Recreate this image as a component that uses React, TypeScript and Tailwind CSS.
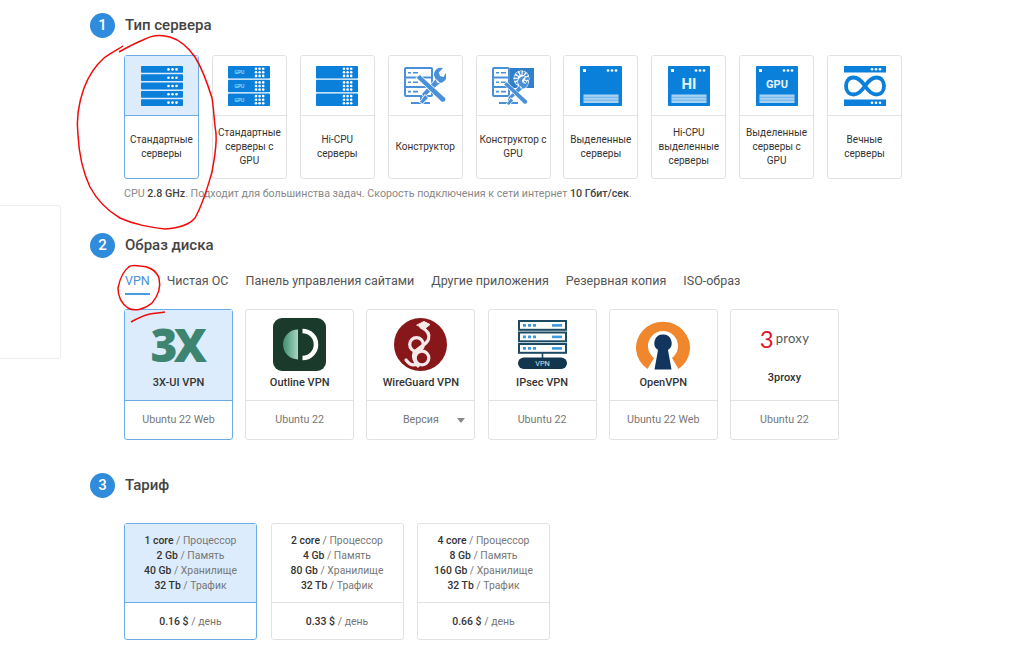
import type { ReactNode } from 'react'

const BLUE = '#0b80db'
const TOOL = '#4a90d9'

function Dots({ x, y, cols, rows, step = 3.4, r = 0.95 }: { x: number; y: number; cols: number; rows: number; step?: number; r?: number }) {
  const items = []
  for (let i = 0; i < cols; i++) {
    for (let j = 0; j < rows; j++) {
      items.push(<circle key={`${i}-${j}`} cx={x + i * step} cy={y + j * step} r={r} fill="#fff" />)
    }
  }
  return <>{items}</>
}

function StandardIcon() {
  return (
    <svg width="42" height="40" viewBox="0 0 42 40">
      {[0, 8.3, 16.6, 24.9, 33.2].map((y) => (
        <g key={y}>
          <rect y={y} width="42" height="6.8" rx="0.8" fill={BLUE} />
          <Dots x={27.5} y={y + 3.4} cols={3} rows={1} step={4} r={1.3} />
        </g>
      ))}
    </svg>
  )
}

function GpuRacksIcon({ gpu }: { gpu: boolean }) {
  return (
    <svg width="42" height="40" viewBox="0 0 42 40">
      {[0, 13.7, 27.4].map((y) => (
        <g key={y}>
          <rect y={y} width="42" height="12.6" rx="0.8" fill={BLUE} />
          {gpu && (
            <text x="6.5" y={y + 8.2} fontSize="5" fill="#d8ebfb" fontFamily="Roboto, sans-serif">GPU</text>
          )}
          <Dots x={28} y={y + 2.7} cols={3} rows={3} step={3.6} r={1.3} />
        </g>
      ))}
    </svg>
  )
}

// crossed wrench and screwdriver, white halo keeps it apart from the server lines
function ToolsPart() {
  return (
    <g stroke="#fff" strokeWidth="1.4" paintOrder="stroke">
      <path d="M18 28 L20 31 L36 17 L32 13 Z M30 9.5 A7 7 0 0 1 39 2 L34.8 6.5 L36 10 L39.6 11 L41.8 7 A7 7 0 0 1 33 16.5 Z" fill={TOOL} />
      <path d="M16 36 L21 29 L24 32 L18.5 37.5 Z" fill={TOOL} />
      <path d="M16 9 L19 12 L41 32 C42.5 34 40 37 37.5 35.5 L15 14 L12.5 11.5 Z" fill={TOOL} />
    </g>
  )
}

function ConstructorIcon({ gpu }: { gpu: boolean }) {
  const right = gpu ? 17 : 28
  return (
    <svg width="42" height="40" viewBox="0 0 42 40">
      <rect x="1" y="2" width={right - 1} height="28" rx="1" fill="none" stroke={TOOL} strokeWidth="2" />
      <path d={`M1 11.5 H${right} M1 21 H${right}`} stroke={TOOL} strokeWidth="2" />
      <path d="M4 6.8 H7 M9 6.8 H14 M4 16.2 H7 M9 16.2 H14 M4 25.6 H7 M9 25.6 H14" stroke={TOOL} strokeWidth="1.6" />
      <path d="M7 37 H26 M17 30 V37" stroke={TOOL} strokeWidth="2" />
      {gpu ? (
        <g>
          <rect x="18" y="2" width="24" height="20" fill="#2f7fc9" />
          <circle cx="29.5" cy="12.5" r="8" fill="#fff" />
          <circle cx="29.5" cy="12.5" r="5.6" fill="none" stroke={TOOL} strokeWidth="3.6" strokeDasharray="1.8 1.2" />
          <g transform="translate(2 9) scale(0.8)">
            <ToolsPart />
          </g>
        </g>
      ) : (
        <ToolsPart />
      )}
    </svg>
  )
}

function DedicatedIcon({ label }: { label?: string }) {
  return (
    <svg width="42" height="40" viewBox="0 0 42 40">
      <rect width="42" height="40" rx="0.8" fill={BLUE} />
      <rect x="3" y="3" width="3" height="3" fill="#fff" />
      <Dots x={28} y={4.5} cols={3} rows={1} step={4} r={1.35} />
      <rect x="3.5" y="28.5" width="35" height="8.5" fill="#a9d3f3" />
      <path d="M3.5 31.3 H38.5 M3.5 34.2 H38.5" stroke="#5aaae8" strokeWidth="0.8" />
      {label && (
        <text
          x="21"
          y={label === 'HI' ? 23 : 22}
          textAnchor="middle"
          fontSize={label === 'HI' ? 15 : 11}
          fontWeight="700"
          fill="#e6f3fd"
          fontFamily="Roboto, sans-serif"
        >
          {label}
        </text>
      )}
    </svg>
  )
}

function InfinityIcon() {
  return (
    <svg width="42" height="40" viewBox="0 0 42 40">
      <rect width="42" height="6.5" fill={BLUE} />
      <rect y="33.5" width="42" height="6.5" fill={BLUE} />
      <Dots x={28} y={3.2} cols={3} rows={1} step={4} r={1.3} />
      <Dots x={28} y={36.8} cols={3} rows={1} step={4} r={1.3} />
      <path
        d="M21 20 C17 14 14 11.5 9.5 11.5 C4.5 11.5 2 15.5 2 20 C2 24.5 4.5 28.5 9.5 28.5 C14 28.5 17 26 21 20 C25 14 28 11.5 32.5 11.5 C37.5 11.5 40 15.5 40 20 C40 24.5 37.5 28.5 32.5 28.5 C28 28.5 25 26 21 20 Z"
        fill="none"
        stroke={BLUE}
        strokeWidth="3.8"
      />
    </svg>
  )
}

function OutlineLogo() {
  return (
    <svg width="53" height="53" viewBox="0 0 53 53">
      <defs>
        <linearGradient id="outlineHalf" x1="0" x2="1" y1="0" y2="0">
          <stop offset="0" stopColor="#3f8f72" />
          <stop offset="1" stopColor="#a9d5c2" />
        </linearGradient>
      </defs>
      <rect width="53" height="53" rx="9" fill="#1a3a2b" />
      <path d="M25 11.5 A15 15 0 0 0 25 41.5 Z" fill="url(#outlineHalf)" />
      <path d="M29.5 13 A13.5 13.5 0 0 1 29.5 40" fill="none" stroke="#fff" strokeWidth="4.6" />
    </svg>
  )
}

function WireGuardLogo() {
  return (
    <svg width="53" height="53" viewBox="0 0 53 53">
      <circle cx="26.5" cy="26.5" r="26.5" fill="#88171a" />
      <g fill="none" stroke="#f5e9e9" strokeWidth="3.2" strokeLinecap="round">
        <circle cx="22.5" cy="26.5" r="6.8" />
        <circle cx="28" cy="40" r="6.8" />
        <path d="M27 9 C33 12 36 16 34.5 21 C33 27 24 29 20 35 C18.5 39 20 43 24 48" />
        <path d="M23 46 C19 48 15 46 12 42" />
        <path d="M23 7 L30 3.5 L36 6.5 L31 10.5 Z" fill="#f5e9e9" strokeWidth="1" />
      </g>
    </svg>
  )
}

function IpsecLogo() {
  return (
    <svg width="49" height="49" viewBox="0 0 49 49">
      {[0, 11.5, 23].map((y) => (
        <g key={y}>
          <rect x="1" y={y + 1} width="47" height="8.8" fill="#fff" stroke="#1d4a63" strokeWidth="2" />
          <path d={`M5 ${y + 5.4} H8 M10 ${y + 5.4} H13 M15 ${y + 5.4} H18`} stroke="#3d9ae0" strokeWidth="2.6" />
          <path d={`M34 ${y + 5.4} H44`} stroke="#3d9ae0" strokeWidth="2.6" />
        </g>
      ))}
      <path d="M24.5 33 V38" stroke="#1d4a63" strokeWidth="1.6" />
      <rect y="37.5" width="49" height="11.5" rx="5.7" fill="#12364d" />
      <text x="24.5" y="46.4" textAnchor="middle" fontSize="7.4" fill="#cfe3ef" fontFamily="Roboto, sans-serif">VPN</text>
    </svg>
  )
}

function OpenVpnLogo() {
  return (
    <svg width="54" height="52" viewBox="0 0 54 52">
      <path d="M11.5 50 A27 26 0 1 1 42.5 50 L36 39 A15 15 0 1 0 18 39 Z" fill="#f0872d" />
      <path d="M27 15.5 A8.5 8.5 0 0 1 32 31 L35.5 50.5 H18.5 L22 31 A8.5 8.5 0 0 1 27 15.5 Z" fill="#12355f" />
    </svg>
  )
}

function ThreeXLogo() {
  return (
    <span className="block text-[46px] leading-[53px] font-extrabold tracking-[-3.5px] -ml-[3px] text-[#3d8570] font-['Open_Sans',sans-serif]">3X</span>
  )
}

function ProxyLogo() {
  return (
    <span className="flex items-center h-[30px]">
      <span className="text-[#e0182d] text-[24px] leading-none font-['Lato',sans-serif]">3</span>
      <span className="text-[#555] text-[13px] leading-none tracking-[0.3px] ml-[2px] font-['Lato',sans-serif]">proxy</span>
    </span>
  )
}

const serverTypes: { icon: ReactNode; label: string[]; active?: boolean }[] = [
  { icon: <StandardIcon />, label: ['Стандартные', 'серверы'], active: true },
  { icon: <GpuRacksIcon gpu />, label: ['Стандартные', 'серверы с', 'GPU'] },
  { icon: <GpuRacksIcon gpu={false} />, label: ['Hi-CPU', 'серверы'] },
  { icon: <ConstructorIcon gpu={false} />, label: ['Конструктор'] },
  { icon: <ConstructorIcon gpu />, label: ['Конструктор с', 'GPU'] },
  { icon: <DedicatedIcon />, label: ['Выделенные', 'серверы'] },
  { icon: <DedicatedIcon label="HI" />, label: ['Hi-CPU', 'выделенные', 'серверы'] },
  { icon: <DedicatedIcon label="GPU" />, label: ['Выделенные', 'серверы с', 'GPU'] },
  { icon: <InfinityIcon />, label: ['Вечные', 'серверы'] },
]

const tabs = ['VPN', 'Чистая ОС', 'Панель управления сайтами', 'Другие приложения', 'Резервная копия', 'ISO-образ']

const images: { logo: ReactNode; name: string; version: string; active?: boolean; select?: boolean; short?: boolean }[] = [
  { logo: <ThreeXLogo />, name: '3X-UI VPN', version: 'Ubuntu 22 Web', active: true },
  { logo: <OutlineLogo />, name: 'Outline VPN', version: 'Ubuntu 22' },
  { logo: <WireGuardLogo />, name: 'WireGuard VPN', version: 'Версия', select: true },
  { logo: <IpsecLogo />, name: 'IPsec VPN', version: 'Ubuntu 22' },
  { logo: <OpenVpnLogo />, name: 'OpenVPN', version: 'Ubuntu 22 Web' },
  { logo: <ProxyLogo />, name: '3proxy', version: 'Ubuntu 22', short: true },
]

const tariffs = [
  { core: '1 core', ram: '2 Gb', disk: '40 Gb', price: '0.16 $', active: true },
  { core: '2 core', ram: '4 Gb', disk: '80 Gb', price: '0.33 $' },
  { core: '4 core', ram: '8 Gb', disk: '160 Gb', price: '0.66 $' },
]

function StepTitle({ n, title }: { n: number; title: string }) {
  return (
    <div className="flex items-center gap-[10px] h-[25px]">
      <span className="w-[25px] h-[25px] rounded-full bg-[#2f8bdc] text-white text-[15px] font-medium flex items-center justify-center">{n}</span>
      <h2 className="text-[15px] font-medium text-[#444]">{title}</h2>
    </div>
  )
}

function Spec({ value, name }: { value: string; name: string }) {
  return (
    <p>
      <b className="font-medium text-[#333]">{value}</b>
      <span className="text-[#777]"> / {name}</span>
    </p>
  )
}

function Scribbles() {
  return (
    <svg className="absolute inset-0 pointer-events-none" width="1024" height="663" viewBox="0 0 1024 663" fill="none" stroke="#f00a0a" strokeWidth="1.5">
      <path d="M119 52 C128 47 135 43 143 40 C150 36 160 34 170 37 C180 40 188 47 195 57 C202 68 207 82 212 98 C214 110 214 122 216 133 C217 148 214 160 212 172 C208 186 203 204 195 218 C190 224 180 228 165 229 C150 227 135 225 120 218 C108 211 97 200 90 187 C83 172 79 155 78 135 C76 118 79 102 84 88 C89 75 96 65 104 58 C111 53 117 50 123 46" />
      <path d="M130 266 C124 270 120 278 118 288 C118 297 122 304 128 308 C135 312 145 309 152 303 C158 296 161 287 159 278 C156 270 148 266 140 266 C135 265 131 265 128 267" />
      <path d="M131 322 C138 318 146 315 150 314 C155 313 160 313 165 312" />
    </svg>
  )
}

export default function App() {
  return (
    <div className="relative w-[1024px] h-[663px] overflow-hidden bg-white flex font-['Roboto',sans-serif]">
      <aside className="w-[61px] shrink-0 h-[154px] mt-[205px] border border-l-0 border-[#eeeeee] rounded-r-[3px]" />

      <main className="pl-[29px] pt-[13px]">
        <StepTitle n={1} title="Тип сервера" />
        <div className="ml-[34px] mt-[17px] flex gap-[12.875px]">
          {serverTypes.map((s) => (
            <div
              key={s.label.join(' ')}
              className={`w-[75px] h-[124px] rounded-[3px] border flex flex-col ${s.active ? 'border-[#6aabe8]' : 'border-[#e2e2e2]'}`}
            >
              <div className={`h-[60px] shrink-0 flex items-center justify-center border-b ${s.active ? 'bg-[#dcecfc] border-[#6aabe8]' : 'border-[#e2e2e2]'}`}>
                {s.icon}
              </div>
              <div className="flex-1 flex flex-col items-center justify-center text-[10px] leading-[14px] text-[#333] text-center whitespace-nowrap">
                {s.label.map((l) => (
                  <span key={l}>{l}</span>
                ))}
              </div>
            </div>
          ))}
        </div>
        <p className="ml-[34px] mt-[8px] text-[10.66px] leading-[14px] text-[#888] whitespace-nowrap">
          CPU <b className="font-medium text-[#444]">2.8 GHz</b>. Подходит для большинства задач. Скорость подключения к сети интернет <b className="font-medium text-[#444]">10 Гбит/сек</b>.
        </p>

        <div className="mt-[32px]">
          <StepTitle n={2} title="Образ диска" />
        </div>
        <div className="ml-[35px] mt-[14px] flex gap-[17px] text-[12.5px] leading-[18px] text-[#555]">
          {tabs.map((t, i) => (
            <span key={t} className={`pb-[3px] border-b-2 ${i === 0 ? 'text-[#4a90d9] border-[#4a9be6]' : 'border-transparent'}`}>
              {t}
            </span>
          ))}
        </div>
        <div className="ml-[34px] mt-[14px] flex gap-[12.2px]">
          {images.map((img) => (
            <div
              key={img.name}
              className={`w-[109px] h-[131px] rounded-[3px] border flex flex-col ${img.active ? 'border-[#6aabe8]' : 'border-[#e2e2e2]'}`}
            >
              <div className={`h-[91px] shrink-0 border-b flex flex-col items-center ${img.active ? 'bg-[#dcecfc] border-[#6aabe8]' : 'border-[#e2e2e2]'}`}>
                <div className={`flex items-center justify-center ${img.short ? 'h-[45px] mt-[6px]' : 'h-[53px] mt-[8px]'}`}>{img.logo}</div>
                <span className={`text-[11px] leading-[14px] font-medium text-[#333] ${img.short ? 'mt-[10px]' : 'mt-[5px]'}`}>{img.name}</span>
              </div>
              <div className="flex-1 relative pt-[1px] flex items-center justify-center text-[10.7px] text-[#777]">
                {img.version}
                {img.select && <span className="absolute right-[9px] top-[17px] w-0 h-0 border-x-[4px] border-x-transparent border-t-[5px] border-t-[#888]" />}
              </div>
            </div>
          ))}
        </div>

        <div className="mt-[33px]">
          <StepTitle n={3} title="Тариф" />
        </div>
        <div className="ml-[34px] mt-[25px] flex gap-[13.5px]">
          {tariffs.map((t) => (
            <div
              key={t.price}
              className={`w-[133px] h-[117px] rounded-[3px] border flex flex-col ${t.active ? 'border-[#6aabe8]' : 'border-[#e2e2e2]'}`}
            >
              <div className={`h-[79px] shrink-0 border-b pb-[1px] flex flex-col justify-center text-center text-[10.4px] leading-[15px] ${t.active ? 'bg-[#dcecfc] border-[#6aabe8]' : 'border-[#e2e2e2]'}`}>
                <Spec value={t.core} name="Процессор" />
                <Spec value={t.ram} name="Память" />
                <Spec value={t.disk} name="Хранилище" />
                <Spec value="32 Tb" name="Трафик" />
              </div>
              <div className="flex-1 pt-[1px] flex items-center justify-center text-[10.5px]">
                <Spec value={t.price} name="день" />
              </div>
            </div>
          ))}
        </div>
      </main>

      <Scribbles />
    </div>
  )
}
